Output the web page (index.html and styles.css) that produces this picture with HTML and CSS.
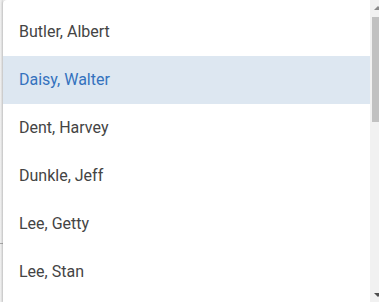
FILE: index.html
```html
<!DOCTYPE html>
<html lang="en">
<head>
  <meta charset="UTF-8" />
  <meta name="viewport" content="width=device-width, initial-scale=1.0"/>
  <title>Select person</title>
  <link rel="stylesheet" href="styles.css">
</head>
<body>
  <div class="page">
    <div class="behind">
      <div class="field-line"></div>
    </div>
    <div class="menu">
      <ul class="list">
        <li>Butler, Albert</li>
        <li class="selected">Daisy, Walter</li>
        <li>Dent, Harvey</li>
        <li>Dunkle, Jeff</li>
        <li>Lee, Getty</li>
        <li>Lee, Stan</li>
      </ul>
      <div class="scrollbar">
        <div class="scroll-inner">
          <div class="arrow-box"><span class="arrow up"></span></div>
          <div class="thumb"></div>
          <div class="spacer"></div>
          <div class="arrow-box"><span class="arrow down"></span></div>
        </div>
      </div>
    </div>
  </div>
</body>
</html>
```

FILE: styles.css
```css
* {
  box-sizing: border-box;
}
body {
  margin: 0;
  overflow: hidden;
  background: #f4f4f4;
  font-family: Roboto, "Liberation Sans", sans-serif;
}
.page {
  display: flex;
  height: 302px;
}
.behind {
  width: 3px;
  flex-shrink: 0;
  background: linear-gradient(to right, #f2f2f2, #dedede);
  padding-top: 243px;
}
.field-line {
  height: 1px;
  background: #a8a8a8;
}
.menu {
  flex: 1;
  display: flex;
  background: #fff;
  border-top-left-radius: 4px;
  box-shadow: -1px 0 2px rgba(0,0,0,0.12);
  overflow: hidden;
}
.list {
  flex: 1;
  list-style: none;
  margin: 0;
  padding: 8px 0;
}
.list li {
  height: 48px;
  line-height: 48px;
  padding-left: 16px;
  font-size: 16px;
  color: #444;
}
.list li.selected {
  background: #dde7f1;
  color: #3472be;
}
.scrollbar {
  width: 9px;
  flex-shrink: 0;
  overflow: hidden;
  background: #f1f1f1;
}
.scroll-inner {
  width: 15px;
  height: 100%;
  display: flex;
  flex-direction: column;
}
.arrow-box {
  height: 15px;
  display: flex;
  justify-content: center;
  align-items: center;
}
.arrow {
  width: 0;
  height: 0;
  border-left: 4px solid transparent;
  border-right: 4px solid transparent;
}
.arrow.up {
  border-bottom: 4px solid #8a8a8a;
}
.arrow.down {
  border-top: 4px solid #505050;
}
.thumb {
  margin: 2px 0 0 2px;
  width: 11px;
  height: 105px;
  background: #c1c1c1;
}
.spacer {
  flex: 1;
}
```
